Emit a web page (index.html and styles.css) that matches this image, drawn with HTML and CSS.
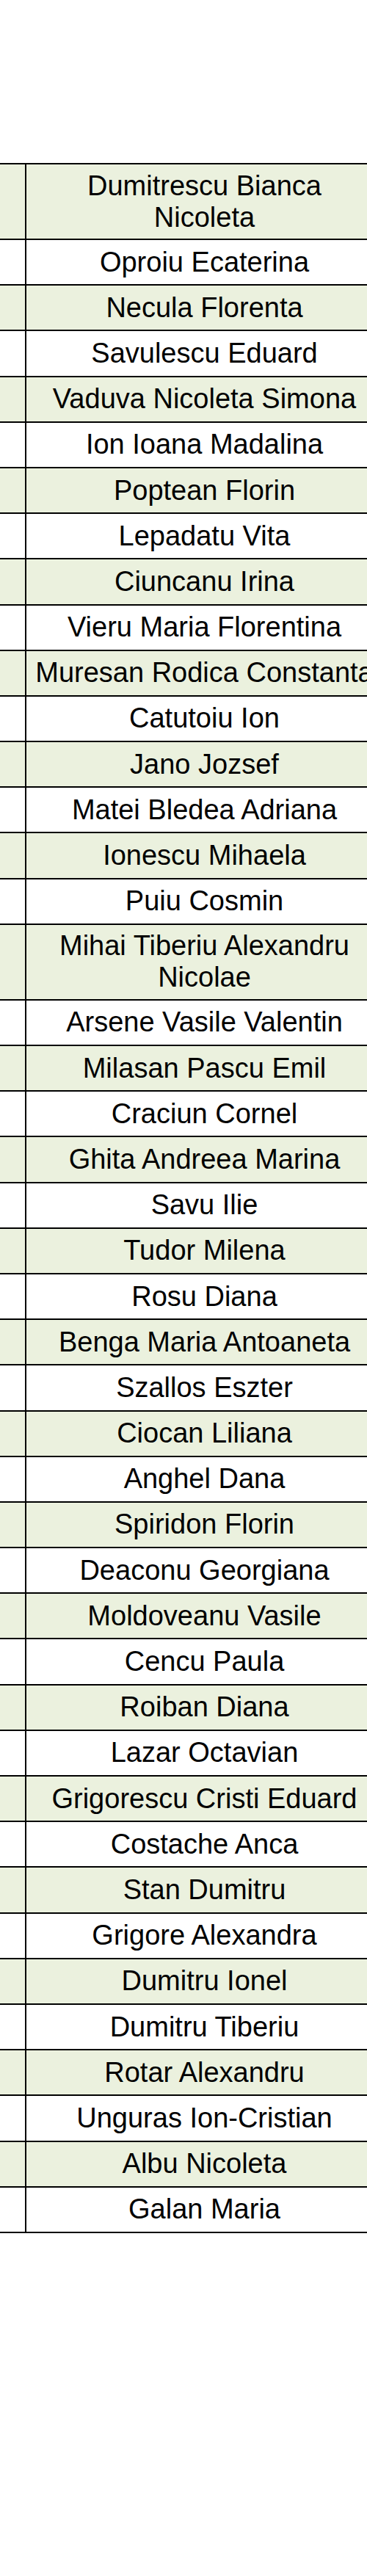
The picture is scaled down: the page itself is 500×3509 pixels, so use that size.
FILE: index.html
```html
<!DOCTYPE html>
<html lang="ro">
<head>
<meta charset="utf-8">
<title>Lista</title>
<link rel="stylesheet" href="styles.css">
</head>
<body>
<div class="sheet">
<table class="roster">
<colgroup><col class="c-idx"><col class="c-name"></colgroup>
<tbody>
<tr class="alt tall"><td class="idx"></td><td class="name">Dumitrescu Bianca<br>Nicoleta</td></tr>
<tr><td class="idx"></td><td class="name">Oproiu Ecaterina</td></tr>
<tr class="alt"><td class="idx"></td><td class="name">Necula Florenta</td></tr>
<tr><td class="idx"></td><td class="name">Savulescu Eduard</td></tr>
<tr class="alt"><td class="idx"></td><td class="name">Vaduva Nicoleta Simona</td></tr>
<tr><td class="idx"></td><td class="name">Ion Ioana Madalina</td></tr>
<tr class="alt"><td class="idx"></td><td class="name">Poptean Florin</td></tr>
<tr><td class="idx"></td><td class="name">Lepadatu Vita</td></tr>
<tr class="alt"><td class="idx"></td><td class="name">Ciuncanu Irina</td></tr>
<tr><td class="idx"></td><td class="name">Vieru Maria Florentina</td></tr>
<tr class="alt"><td class="idx"></td><td class="name">Muresan Rodica Constanta</td></tr>
<tr><td class="idx"></td><td class="name">Catutoiu Ion</td></tr>
<tr class="alt"><td class="idx"></td><td class="name">Jano Jozsef</td></tr>
<tr><td class="idx"></td><td class="name">Matei Bledea Adriana</td></tr>
<tr class="alt"><td class="idx"></td><td class="name">Ionescu Mihaela</td></tr>
<tr><td class="idx"></td><td class="name">Puiu Cosmin</td></tr>
<tr class="alt tall"><td class="idx"></td><td class="name">Mihai Tiberiu Alexandru<br>Nicolae</td></tr>
<tr><td class="idx"></td><td class="name">Arsene Vasile Valentin</td></tr>
<tr class="alt"><td class="idx"></td><td class="name">Milasan Pascu Emil</td></tr>
<tr><td class="idx"></td><td class="name">Craciun Cornel</td></tr>
<tr class="alt"><td class="idx"></td><td class="name">Ghita Andreea Marina</td></tr>
<tr><td class="idx"></td><td class="name">Savu Ilie</td></tr>
<tr class="alt"><td class="idx"></td><td class="name">Tudor Milena</td></tr>
<tr><td class="idx"></td><td class="name">Rosu Diana</td></tr>
<tr class="alt"><td class="idx"></td><td class="name">Benga Maria Antoaneta</td></tr>
<tr><td class="idx"></td><td class="name">Szallos Eszter</td></tr>
<tr class="alt"><td class="idx"></td><td class="name">Ciocan Liliana</td></tr>
<tr><td class="idx"></td><td class="name">Anghel Dana</td></tr>
<tr class="alt"><td class="idx"></td><td class="name">Spiridon Florin</td></tr>
<tr><td class="idx"></td><td class="name">Deaconu Georgiana</td></tr>
<tr class="alt"><td class="idx"></td><td class="name">Moldoveanu Vasile</td></tr>
<tr><td class="idx"></td><td class="name">Cencu Paula</td></tr>
<tr class="alt"><td class="idx"></td><td class="name">Roiban Diana</td></tr>
<tr><td class="idx"></td><td class="name">Lazar Octavian</td></tr>
<tr class="alt"><td class="idx"></td><td class="name">Grigorescu Cristi Eduard</td></tr>
<tr><td class="idx"></td><td class="name">Costache Anca</td></tr>
<tr class="alt"><td class="idx"></td><td class="name">Stan Dumitru</td></tr>
<tr><td class="idx"></td><td class="name">Grigore Alexandra</td></tr>
<tr class="alt"><td class="idx"></td><td class="name">Dumitru Ionel</td></tr>
<tr><td class="idx"></td><td class="name">Dumitru Tiberiu</td></tr>
<tr class="alt"><td class="idx"></td><td class="name">Rotar Alexandru</td></tr>
<tr><td class="idx"></td><td class="name">Unguras Ion-Cristian</td></tr>
<tr class="alt"><td class="idx"></td><td class="name">Albu Nicoleta</td></tr>
<tr><td class="idx"></td><td class="name">Galan Maria</td></tr>
</tbody>
</table>
</div>
</body>
</html>
```
FILE: styles.css
```css
html, body {
  margin: 0;
  padding: 0;
  background: #ffffff;
}

body {
  font-family: "Liberation Sans", Arial, sans-serif;
  color: #000000;
}

.sheet {
  overflow: hidden;
  width: 500px;
  padding-top: 222px;
  padding-bottom: 200px;
}

.roster {
  border-collapse: collapse;
  table-layout: fixed;
  width: 522px;
}

.c-idx {
  width: 35px;
}

.c-name {
  width: 487px;
}

.roster tr {
  height: 62.2px;
}

.roster tr.tall {
  height: 103px;
}

.roster td {
  border: 2px solid #000000;
  padding: 0;
  vertical-align: middle;
}

.roster td.idx {
  border-left: 0;
}

.roster td.name {
  text-align: center;
  font-size: 38px;
  line-height: 43px;
  white-space: nowrap;
}

.roster tr.alt td {
  background: #ebf1de;
}
```
